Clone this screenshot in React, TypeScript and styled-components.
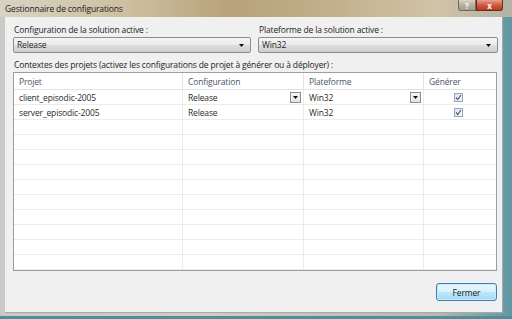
import React from "react";
import styled, { createGlobalStyle } from "styled-components";

const Global = createGlobalStyle`
  html, body { margin: 0; padding: 0; background: #3c6f7a; }
  body { font-family: "Open Sans", "Noto Sans", "Liberation Sans", sans-serif; }
  * { box-sizing: border-box; }
`;

const Frame = styled.div`
  width: 512px;
  height: 319px;
  display: flex;
  flex-direction: column;
  background: linear-gradient(90deg, #c9c9c7 0%, #d2cdbf 40%, #b9b9b2 85%, #5f97a3 100%);
  border-bottom: 3px solid #4f8f9b;
  overflow: hidden;
`;

const TitleBar = styled.div`
  height: 17px;
  flex: none;
  display: flex;
  align-items: flex-start;
  background: linear-gradient(90deg, #d9d3c3 0%, #cdbf9f 25%, #b7a27b 45%, #c2b08c 65%, #d1c3a6 85%, #b3b2a5 100%);
`;

const Title = styled.div`
  flex: 1;
  padding: 3px 0 0 5px;
  font-size: 8.5px;
  letter-spacing: -0.15px;
  line-height: 12px;
  color: #1b1b1b;
  white-space: nowrap;
`;

const CaptionButtons = styled.div`
  display: flex;
  margin-right: 9px;
`;

const CaptionButton = styled.div<{ $close?: boolean }>`
  width: ${(p) => (p.$close ? 27 : 18)}px;
  height: 11px;
  display: flex;
  align-items: center;
  justify-content: center;
  font-size: 8px;
  font-weight: bold;
  color: #fff;
  border: 1px solid ${(p) => (p.$close ? "#6b2a1e" : "#6d6a62")};
  border-top: none;
  border-radius: ${(p) => (p.$close ? "0 0 3px 0" : "0 0 0 3px")};
  background: ${(p) =>
    p.$close
      ? "linear-gradient(180deg, #e6a08d 0%, #cf5a3e 50%, #b83a22 100%)"
      : "linear-gradient(180deg, #d8d3c6 0%, #b8b0a0 50%, #a59c8a 100%)"};
`;

const Body = styled.div`
  flex: 1;
  display: flex;
  margin: 0 9px 3px 5px;
  background: #f0f0f0;
  border-right: 1px solid #a9a9a9;
  border-bottom: 1px solid #a9a9a9;
`;

const Content = styled.div`
  flex: 1;
  display: flex;
  flex-direction: column;
  padding: 7px 5px 0 8px;
  font-size: 8.5px;
  letter-spacing: -0.15px;
  color: #1e1e1e;
`;

const TopGrid = styled.div`
  display: grid;
  grid-template-columns: 238px 240px;
  column-gap: 7px;
`;

const Field = styled.div`
  display: flex;
  flex-direction: column;
`;

const Label = styled.div`
  height: 12px;
  line-height: 12px;
  padding-left: 1px;
  white-space: nowrap;
  margin-bottom: 1px;
`;

const Combo = styled.div`
  height: 16px;
  display: flex;
  align-items: center;
  padding: 0 6px 0 3px;
  border: 1px solid #8d8d8d;
  border-radius: 2px;
  background: linear-gradient(180deg, #f3f3f3 0%, #ebebeb 50%, #dddddd 51%, #cfcfcf 100%);
`;

const ComboText = styled.div`
  flex: 1;
  line-height: 14px;
`;

const Arrow = () => (
  <svg width="5" height="3" viewBox="0 0 5 3">
    <path d="M0 0h5L2.5 3z" fill="#111" />
  </svg>
);

const SectionLabel = styled(Label)`
  margin-top: 6px;
  margin-bottom: 1px;
`;

const Table = styled.div`
  width: 484px;
  display: grid;
  grid-template-columns: 169px 121px 120px 72px;
  grid-template-rows: 17px repeat(12, 15px);
  border: 1px solid #9a9fa6;
  background: #fff;
`;

const HeadCell = styled.div<{ $last?: boolean }>`
  display: flex;
  align-items: center;
  padding-left: 5px;
  color: #4a5566;
  border-bottom: 1px solid #e3e3e3;
  border-right: ${(p) => (p.$last ? "none" : "1px solid #e3e3e3")};
`;

const Cell = styled.div<{ $last?: boolean; $center?: boolean }>`
  display: flex;
  align-items: center;
  justify-content: ${(p) => (p.$center ? "center" : "flex-start")};
  padding-left: ${(p) => (p.$center ? 0 : 5)}px;
  padding-right: 2px;
  color: #2b2b2b;
  border-bottom: 1px solid #ececec;
  border-right: ${(p) => (p.$last ? "none" : "1px solid #ececec")};
`;

const CellText = styled.span`
  flex: 1;
`;

const MiniDrop = styled.div`
  width: 11px;
  height: 11px;
  display: flex;
  align-items: center;
  justify-content: center;
  border: 1px solid #8c8c8c;
  background: linear-gradient(180deg, #f6f6f6 0%, #e4e4e4 100%);
`;

const Check = styled.div`
  width: 9px;
  height: 9px;
  display: flex;
  align-items: center;
  justify-content: center;
  border: 1px solid #9aa3b3;
  background: linear-gradient(135deg, #dfe5ee 0%, #f7f8fb 100%);
  margin-right: 2px;
`;

const Tick = () => (
  <svg width="7" height="7" viewBox="0 0 7 7">
    <path d="M1 3.5 L2.8 5.6 L6 1" stroke="#4b5f80" strokeWidth="1.2" fill="none" />
  </svg>
);

const Footer = styled.div`
  display: flex;
  justify-content: flex-end;
  padding: 12px 1px 0 0;
`;

const Button = styled.button`
  width: 61px;
  height: 18px;
  font-family: inherit;
  font-size: 8.5px;
  letter-spacing: -0.15px;
  color: #1e1e1e;
  padding: 0;
  border: 1px solid #3c7fb1;
  border-radius: 3px;
  background: linear-gradient(180deg, #eaf6fd 0%, #d9f0fc 50%, #bee6fd 51%, #a7d9f5 100%);
  box-shadow: inset 0 0 0 1px #c8ecfb;
`;

const rows = [
  { p: "client_episodic-2005", c: "Release", pl: "Win32", drop: true, g: true },
  { p: "server_episodic-2005", c: "Release", pl: "Win32", drop: false, g: true },
];

export default function App() {
  const empty = Array.from({ length: 12 - rows.length });
  return (
    <>
      <Global />
      <Frame>
        <TitleBar>
          <Title>Gestionnaire de configurations</Title>
          <CaptionButtons>
            <CaptionButton>?</CaptionButton>
            <CaptionButton $close>x</CaptionButton>
          </CaptionButtons>
        </TitleBar>
        <Body>
          <Content>
            <TopGrid>
              <Field>
                <Label>Configuration de la solution active :</Label>
                <Combo>
                  <ComboText>Release</ComboText>
                  <Arrow />
                </Combo>
              </Field>
              <Field>
                <Label>Plateforme de la solution active :</Label>
                <Combo>
                  <ComboText>Win32</ComboText>
                  <Arrow />
                </Combo>
              </Field>
            </TopGrid>
            <SectionLabel>
              Contextes des projets (activez les configurations de projet à générer ou à déployer) :
            </SectionLabel>
            <Table>
              <HeadCell>Projet</HeadCell>
              <HeadCell>Configuration</HeadCell>
              <HeadCell>Plateforme</HeadCell>
              <HeadCell $last>Générer</HeadCell>
              {rows.map((r) => (
                <React.Fragment key={r.p}>
                  <Cell><CellText>{r.p}</CellText></Cell>
                  <Cell>
                    <CellText>{r.c}</CellText>
                    {r.drop && <MiniDrop><Arrow /></MiniDrop>}
                  </Cell>
                  <Cell>
                    <CellText>{r.pl}</CellText>
                    {r.drop && <MiniDrop><Arrow /></MiniDrop>}
                  </Cell>
                  <Cell $last $center>{r.g && <Check><Tick /></Check>}</Cell>
                </React.Fragment>
              ))}
              {empty.map((_, i) => (
                <React.Fragment key={i}>
                  <Cell />
                  <Cell />
                  <Cell />
                  <Cell $last />
                </React.Fragment>
              ))}
            </Table>
            <Footer>
              <Button>Fermer</Button>
            </Footer>
          </Content>
        </Body>
      </Frame>
    </>
  );
}
